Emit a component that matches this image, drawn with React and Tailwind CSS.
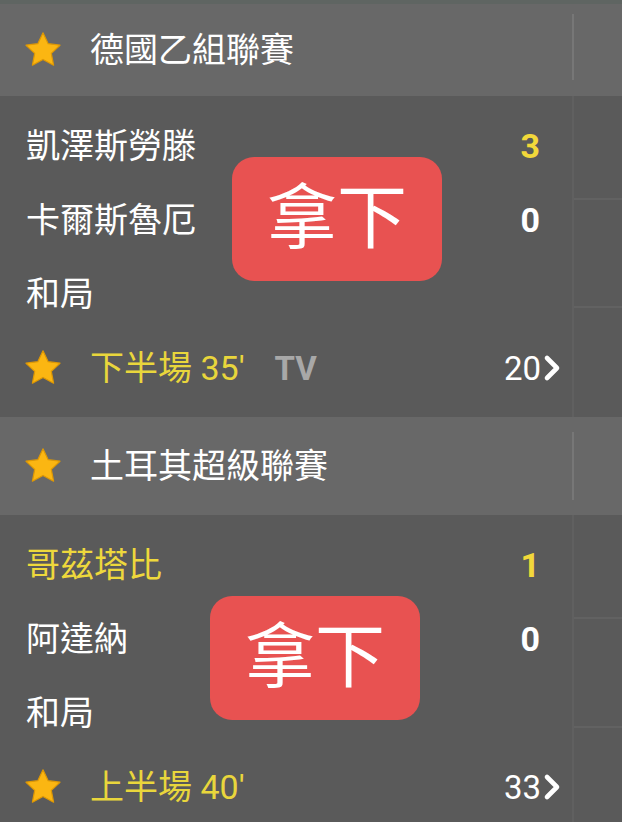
const CJK = "font-['Roboto','Noto_Sans_CJK_TC',sans-serif]";

const Star = () => (
  <svg viewBox="0 0 24 24" className="h-[42px] w-[42px] shrink-0">
    <path
      d="M12 2.2l2.95 6.2 6.75.85-4.95 4.7 1.3 6.75L12 17.4l-6.05 3.3 1.3-6.75-4.95-4.7 6.75-.85z"
      fill="#fbb612"
      stroke="#de9804"
      strokeWidth="0.7"
      strokeLinejoin="round"
    />
  </svg>
);

const Chevron = () => (
  <svg viewBox="0 0 20 28" className="ml-[1px] h-[28px] w-[20px]">
    <path d="M5 4l10 10-10 10" fill="none" stroke="#ffffff" strokeWidth="4.6" strokeLinecap="round" strokeLinejoin="round" />
  </svg>
);

const matches = [
  {
    league: '德國乙組聯賽',
    home: '凱澤斯勞滕',
    away: '卡爾斯魯厄',
    homeScore: 3,
    awayScore: 0,
    homeLeading: false,
    time: "下半場 35'",
    tv: true,
    count: 20,
    badgeClass: 'left-[232px] top-[61px]',
    cells: ['h-[104px]', 'h-[108px]', 'flex-1'],
  },
  {
    league: '土耳其超級聯賽',
    home: '哥茲塔比',
    away: '阿達納',
    homeScore: 1,
    awayScore: 0,
    homeLeading: true,
    time: "上半場 40'",
    tv: false,
    count: 33,
    badgeClass: 'left-[210px] top-[81px]',
    cells: ['h-[104px]', 'h-[109px]', 'flex-1'],
  },
];

function MatchCard({ m, first }) {
  return (
    <div>
      {/* league header */}
      <div className={`flex items-center bg-[#686868] ${first ? 'h-[92px]' : 'h-[98px]'}`}>
        <div className="ml-[22px]">
          <Star />
        </div>
        <span className={`ml-[26px] flex-1 text-[34px] leading-none text-white ${CJK}`}>{m.league}</span>
        <div className={`w-[50px] self-stretch ${first ? 'pt-[10px] pb-[16px]' : 'py-[15px]'}`}>
          <div className="h-full w-[2px] bg-[#777777]" />
        </div>
      </div>

      {/* match body */}
      <div className="flex bg-[#5a5a5a]">
        <div className={`relative flex-1 pt-[13px] pb-[12px] ${CJK}`}>
          <div className="flex h-[74px] items-center justify-between pl-[26px] pr-[32px]">
            <span className={`text-[34px] leading-none ${m.homeLeading ? 'text-[#eed83c]' : 'text-white'}`}>{m.home}</span>
            <span className="text-[34px] font-bold leading-none text-[#f2d83a]">{m.homeScore}</span>
          </div>
          <div className="flex h-[74px] items-center justify-between pl-[26px] pr-[32px]">
            <span className="text-[34px] leading-none text-white">{m.away}</span>
            <span className="text-[34px] font-bold leading-none text-white">{m.awayScore}</span>
          </div>
          <div className="flex h-[74px] items-center pl-[26px]">
            <span className="text-[34px] leading-none text-white">和局</span>
          </div>
          <div className="flex h-[74px] items-center pl-[22px] pr-[10px]">
            <Star />
            <span className="ml-[26px] text-[34px] leading-none text-[#e9d63c]">{m.time}</span>
            {m.tv && <span className="ml-[30px] text-[33px] font-bold leading-none text-[#a8a8a8]">TV</span>}
            <div className="ml-auto flex items-center">
              <span className="text-[33px] leading-none text-white">{m.count}</span>
              <Chevron />
            </div>
          </div>

          {/* overlay badge */}
          <div className={`absolute ${m.badgeClass} flex h-[124px] w-[210px] items-center justify-center rounded-[22px] bg-[#e85251]`}>
            <span className="text-[70px] font-normal leading-none text-white">拿下</span>
          </div>
        </div>

        <div className="flex w-[50px] flex-col border-l-2 border-[#606060]">
          {m.cells.map((c, i) => (
            <div key={i} className={`${c} ${i < 2 ? 'border-b-2 border-[#626262]' : ''}`} />
          ))}
        </div>
      </div>
    </div>
  );
}

export default function App() {
  return (
    <div className="h-[822px] w-[622px] overflow-hidden bg-[#5a5a5a]">
      <div className="h-[4px] bg-[#5f6562]" />
      {matches.map((m, i) => (
        <MatchCard key={m.league} m={m} first={i === 0} />
      ))}
    </div>
  );
}
